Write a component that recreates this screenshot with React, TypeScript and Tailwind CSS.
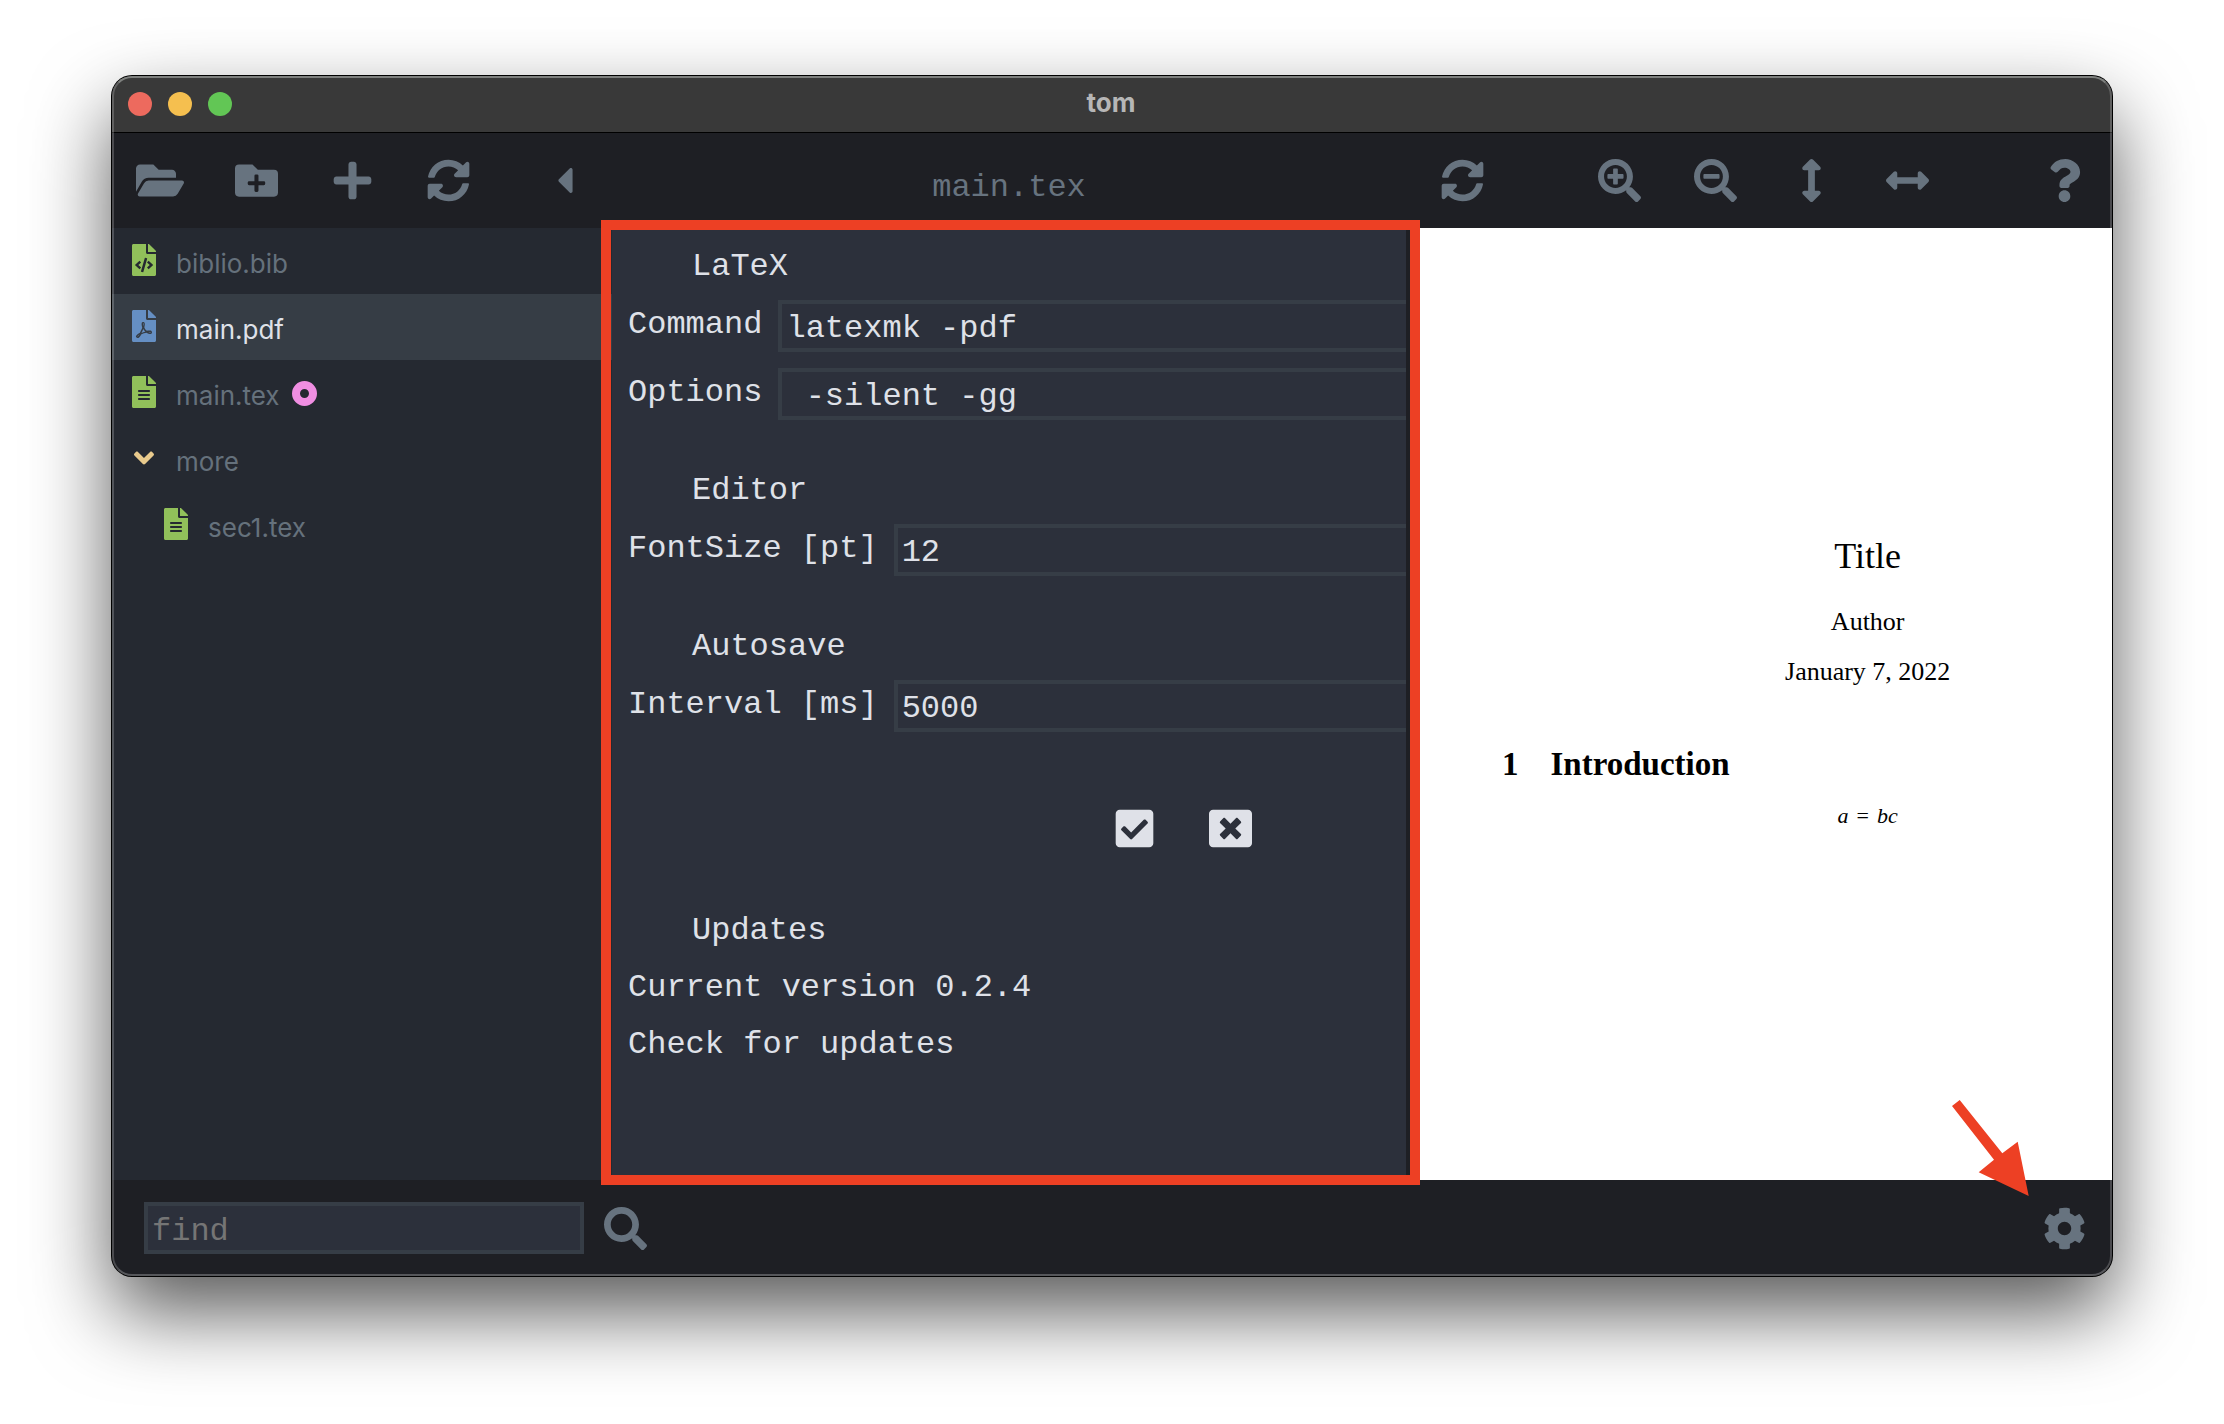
import type { ReactNode } from 'react';
import type { IconType } from 'react-icons';
import {
  FaAngleDown,
  FaArrowsAltH,
  FaArrowsAltV,
  FaCaretLeft,
  FaCheckSquare,
  FaCog,
  FaFileAlt,
  FaFileCode,
  FaFilePdf,
  FaFolderOpen,
  FaFolderPlus,
  FaPlus,
  FaQuestion,
  FaSearch,
  FaSearchMinus,
  FaSearchPlus,
  FaSyncAlt,
  FaWindowClose,
} from 'react-icons/fa';

function ToolButton({ icon: Icon, label, wide }: { icon: IconType; label: string; wide?: boolean }) {
  return (
    <button type="button" aria-label={label} className="flex h-24 w-24 flex-none items-center justify-center">
      <Icon className={wide ? 'h-[43px] w-12' : 'h-[43px] w-[43px]'} />
    </button>
  );
}

type Entry = {
  name: string;
  icon: IconType;
  tint: string;
  selected?: boolean;
  modified?: boolean;
  nested?: boolean;
};

const entries: Entry[] = [
  { name: 'biblio.bib', icon: FaFileCode, tint: 'text-[#91c05a]' },
  { name: 'main.pdf', icon: FaFilePdf, tint: 'text-[#658fc3]', selected: true },
  { name: 'main.tex', icon: FaFileAlt, tint: 'text-[#91c05a]', modified: true },
  { name: 'more', icon: FaAngleDown, tint: 'text-[#e9ca8d]' },
  { name: 'sec1.tex', icon: FaFileAlt, tint: 'text-[#91c05a]', nested: true },
];

function FileRow({ name, icon: Icon, tint, selected, modified, nested }: Entry) {
  return (
    <li>
      <button
        type="button"
        className={`flex h-[66px] w-full items-center gap-5 pr-5 text-left ${nested ? 'pl-[52px]' : 'pl-5'} ${
          selected ? 'bg-[#363d45] text-[#dfe1e8]' : 'text-[#65717c]'
        }`}
      >
        <span className={`flex w-6 flex-none justify-center pb-0.5 ${tint}`}>
          <Icon className="h-8 w-8 flex-none" />
        </span>
        <span className="pt-1">{name}</span>
        {modified && <span className="-ml-2 h-[25px] w-[25px] rounded-full border-8 border-[#f08ee2]" />}
      </button>
    </li>
  );
}

function Section({ title, children }: { title: string; children: ReactNode }) {
  return (
    <section className="mb-[30px]">
      <h2 className="pl-16">{title}</h2>
      {children}
    </section>
  );
}

function Field({ id, label, value }: { id: string; label: string; value: string }) {
  return (
    <div className="flex h-[68px] items-start gap-4">
      <label htmlFor={id}>{label}</label>
      <input
        id={id}
        type="text"
        defaultValue={value}
        className="mt-1 h-[52px] min-w-0 flex-1 border-4 border-r-0 border-[#363d46] bg-transparent px-1 pt-1.5 outline-none"
      />
    </div>
  );
}

function Settings() {
  return (
    <form className="flex-1 pt-[10px] pl-4 text-[32px] leading-[58px] text-[#dfe1e8]">
      <Section title="LaTeX">
        <Field id="command" label="Command" value="latexmk -pdf" />
        <Field id="options" label="Options" value=" -silent -gg" />
      </Section>
      <Section title="Editor">
        <Field id="font-size" label="FontSize [pt]" value="12" />
      </Section>
      <Section title="Autosave">
        <Field id="interval" label="Interval [ms]" value="5000" />
      </Section>
      <div className="mt-9 mr-32 flex justify-end">
        <ToolButton icon={FaCheckSquare} label="Apply" />
        <ToolButton icon={FaWindowClose} label="Cancel" />
      </div>
      <section className="mt-[26px] leading-[57px]">
        <h2 className="pl-16">Updates</h2>
        <p>Current version 0.2.4</p>
        <button type="button" className="block">
          Check for updates
        </button>
      </section>
    </form>
  );
}

function Page() {
  return (
    <article className="w-[130%] flex-none pt-[303px] font-['Liberation_Serif',serif] text-[26px] leading-[50px] text-black">
      <h1 className="text-center text-[36px]">Title</h1>
      <p className="mt-4 text-center">Author</p>
      <p className="text-center">January 7, 2022</p>
      <h2 className="mt-[42px] flex gap-8 pl-[88px] text-[33px] font-bold">
        <span>1</span>
        <span>Introduction</span>
      </h2>
      <p className="mt-0.5 text-center text-[22px] italic">
        a<span className="mx-2 not-italic">=</span>bc
      </p>
    </article>
  );
}

export default function App() {
  return (
    <div className="flex min-h-screen flex-col bg-white px-28 pt-[76px] pb-[148px] font-['Inter',sans-serif] text-[26px]">
      <div className="relative flex flex-1 flex-col rounded-[20px] bg-[#1e1f24] text-[#67737f] shadow-[0_0_0_1px_#000,0_36px_80px_rgba(0,0,0,0.66)]">
        <header className="relative flex h-14 items-center gap-4 rounded-t-[20px] bg-[#393939] px-4 shadow-[0_1px_#000]">
          <button type="button" aria-label="Close" className="h-6 w-6 rounded-full bg-[#ed6a5e]" />
          <button type="button" aria-label="Minimize" className="h-6 w-6 rounded-full bg-[#f5bf4f]" />
          <button type="button" aria-label="Zoom" className="h-6 w-6 rounded-full bg-[#62c655]" />
          <h1 className="-ml-4 flex-1 pr-[106px] pb-1 text-center font-bold text-[#b6b6b6]">tom</h1>
        </header>

        <main className="grid flex-1 grid-cols-[500px_minmax(0,1fr)_698px]">
          <nav aria-label="Files" className="flex flex-col">
            <div className="flex">
              <ToolButton icon={FaFolderOpen} label="Open folder" wide />
              <ToolButton icon={FaFolderPlus} label="New folder" />
              <ToolButton icon={FaPlus} label="New file" />
              <ToolButton icon={FaSyncAlt} label="Reload" />
              <span className="flex-1" />
              <ToolButton icon={FaCaretLeft} label="Collapse sidebar" />
            </div>
            <ul className="flex-1 bg-[#252931]">
              {entries.map((entry) => (
                <FileRow key={entry.name} {...entry} />
              ))}
            </ul>
          </nav>

          <section aria-label="Editor" className="mr-2 flex flex-col font-['Liberation_Mono',monospace]">
            <div className="h-24 pt-4 text-center text-[32px] leading-[80px]">main.tex</div>
            <div className="relative flex flex-1 flex-col bg-[#2c303b]">
              <Settings />
              <div className="pointer-events-none absolute -top-2 -right-[14px] -bottom-[5px] -left-[11px] z-10 border-10 border-[#ed4024]" />
            </div>
          </section>

          <section aria-label="Preview" className="flex flex-col">
            <div className="flex h-24 justify-between">
              <ToolButton icon={FaSyncAlt} label="Compile" />
              <div className="flex">
                <ToolButton icon={FaSearchPlus} label="Zoom in" />
                <ToolButton icon={FaSearchMinus} label="Zoom out" />
                <ToolButton icon={FaArrowsAltV} label="Fit height" />
                <ToolButton icon={FaArrowsAltH} label="Fit width" />
              </div>
              <ToolButton icon={FaQuestion} label="Help" />
            </div>
            <div className="relative z-[5] flex flex-1 overflow-hidden bg-white">
              <Page />
            </div>
          </section>
        </main>

        <footer className="flex h-24 items-center gap-5 pl-8">
          <input
            type="text"
            aria-label="Find"
            placeholder="find"
            className="h-[52px] w-[440px] border-4 border-[#363d46] bg-[#2c303b] px-1 pt-1.5 font-['Liberation_Mono',monospace] text-[32px] outline-none placeholder:text-[#757575]"
          />
          <button type="button" aria-label="Search">
            <FaSearch className="h-[43px] w-[43px]" />
          </button>
          <span className="flex-1" />
          <div className="relative">
            <ToolButton icon={FaCog} label="Settings" />
            <svg
              viewBox="0 0 77 96"
              fill="#ed4024"
              aria-hidden="true"
              className="pointer-events-none absolute -top-20 -left-16 z-10 h-24 w-[77px]"
            >
              <path d="M0 6 7.7 0 50.3 53.3 65.7 41.7 76.7 96 26.7 72.3 42 59.7Z" />
            </svg>
          </div>
        </footer>

        <div className="pointer-events-none absolute inset-0 rounded-[20px] border-2 border-t-[#7e807e] border-r-white/20 border-b-white/25 border-l-white/20" />
      </div>
    </div>
  );
}
